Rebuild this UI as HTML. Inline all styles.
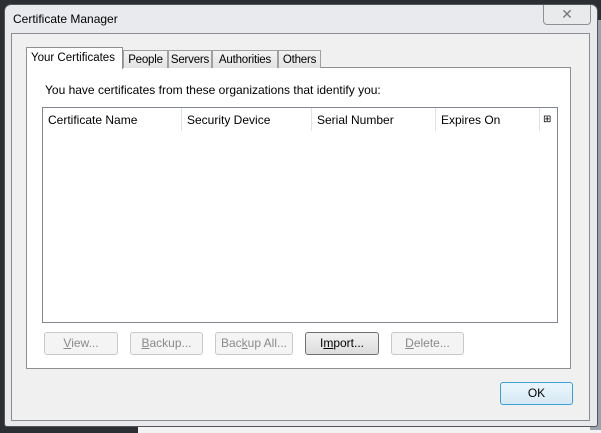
<!DOCTYPE html>
<html><head><style>
body{margin:0;width:601px;height:433px;position:relative;overflow:hidden;background:#2b2f33;font-family:"Liberation Sans",sans-serif;font-size:12px;color:#000}
.a{position:absolute}
.btn{position:absolute;top:332px;border:1px solid #c9c9c9;border-radius:3px;background:#f4f4f4;color:#8a8a8a;text-align:center;line-height:21px;box-sizing:border-box;height:23px;font-size:12px}
.tab{position:absolute;top:50px;height:18px;border:1px solid #a0a0a0;border-bottom:none;background:linear-gradient(#f3f3f3,#e3e3e3);line-height:18px;box-sizing:border-box;text-align:center;font-size:11.5px;letter-spacing:-0.2px;white-space:nowrap}
.col{position:absolute;top:0;height:23px;line-height:24px;padding-left:5px;border-right:1px solid #e2e3e5;box-sizing:border-box}
</style></head><body>
<div class="a" style="left:138px;top:426px;width:463px;height:7px;background:#f2f2f2"></div>
<div class="a" style="left:590px;top:20px;width:11px;height:410px;background:#9aa3ad"></div>
<div class="a" style="left:4px;top:4px;width:594px;height:423px;border:1px solid #555;border-radius:7px 7px 3px 3px;background:#e8eaed;box-sizing:border-box"></div>
<div class="a" style="left:13px;top:12px">Certificate Manager</div>
<div class="a" style="left:543px;top:5px;width:46px;height:19px;border:1px solid #8c8f94;border-top:none;border-radius:0 0 4px 4px;background:#e9eaec;text-align:center;color:#777;font-size:14px;line-height:18px">✕</div>
<div class="a" style="left:11px;top:33px;width:579px;height:388px;border:1px solid #8a8c90;background:#f0f0f0;box-sizing:border-box"></div>
<div class="a" style="left:26px;top:67px;width:545px;height:302px;border:1px solid #8e8f8f;background:#fff;box-sizing:border-box"></div>
<div class="tab" style="left:123px;width:45px">People</div>
<div class="tab" style="left:168px;width:44px">Servers</div>
<div class="tab" style="left:212px;width:66px">Authorities</div>
<div class="tab" style="left:278px;width:43px">Others</div>
<div class="a" style="left:26px;top:47px;width:97px;height:22px;border:1px solid #8e8f8f;border-bottom:none;background:#fff;box-sizing:border-box;line-height:20px;padding-left:4px;font-size:11.5px;white-space:nowrap">Your Certificates</div>
<div class="a" style="left:45px;top:83px">You have certificates from these organizations that identify you:</div>
<div class="a" style="left:42px;top:107px;width:516px;height:216px;border:1px solid #828790;background:#fff;box-sizing:border-box">
 <div class="col" style="left:0;width:139px">Certificate Name</div>
 <div class="col" style="left:139px;width:130px">Security Device</div>
 <div class="col" style="left:269px;width:124px">Serial Number</div>
 <div class="col" style="left:393px;width:104px">Expires On</div>
 <div class="col" style="left:497px;width:17px;border:none;padding-left:3px;font-size:10px">⊞</div>
</div>
<div class="btn" style="left:44px;width:74px"><u>V</u>iew...</div>
<div class="btn" style="left:130px;width:73px"><u>B</u>ackup...</div>
<div class="btn" style="left:215px;width:78px">Bac<u>k</u>up All...</div>
<div class="btn" style="left:305px;width:74px;border-color:#707070;background:linear-gradient(#f2f2f2,#dcdcdc);color:#000">I<u>m</u>port...</div>
<div class="btn" style="left:391px;width:73px"><u>D</u>elete...</div>
<div class="btn" style="left:500px;top:382px;width:73px;border-color:#3c9fd6;background:linear-gradient(#eaf6fd,#d7e9f4);color:#000">OK</div>
</body></html>
